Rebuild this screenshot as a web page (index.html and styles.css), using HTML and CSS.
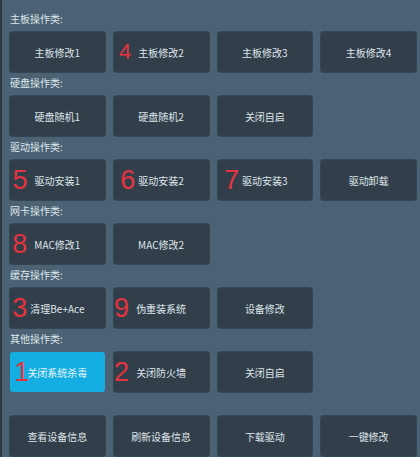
FILE: index.html
```html
<!DOCTYPE html>
<html lang="zh-CN">
<head>
    <meta charset="UTF-8">
    <meta name="viewport" content="width=device-width, initial-scale=1.0">
    <title>工具面板</title>
    <link rel="stylesheet" href="styles.css">
</head>
<body>
    <div class="panel">
        <div class="group-title">主板操作类:</div>
        <div class="btn-row">
            <button class="btn"><span class="txt">主板修改1</span></button>
            <button class="btn"><span class="txt"><span class="num num-sm">4</span>主板修改2</span></button>
            <button class="btn"><span class="txt">主板修改3</span></button>
            <button class="btn"><span class="txt">主板修改4</span></button>
        </div>

        <div class="group-title">硬盘操作类:</div>
        <div class="btn-row">
            <button class="btn"><span class="txt">硬盘随机1</span></button>
            <button class="btn"><span class="txt">硬盘随机2</span></button>
            <button class="btn"><span class="txt">关闭自启</span></button>
        </div>

        <div class="group-title">驱动操作类:</div>
        <div class="btn-row">
            <button class="btn"><span class="txt"><span class="num">5</span>驱动安装1</span></button>
            <button class="btn"><span class="txt"><span class="num num-near">6</span>驱动安装2</span></button>
            <button class="btn"><span class="txt"><span class="num num-near">7</span>驱动安装3</span></button>
            <button class="btn"><span class="txt">驱动卸载</span></button>
        </div>

        <div class="group-title">网卡操作类:</div>
        <div class="btn-row">
            <button class="btn"><span class="txt"><span class="num">8</span>MAC修改1</span></button>
            <button class="btn"><span class="txt">MAC修改2</span></button>
        </div>

        <div class="group-title">缓存操作类:</div>
        <div class="btn-row">
            <button class="btn"><span class="txt"><span class="num num-near">3</span>清理Be+Ace</span></button>
            <button class="btn"><span class="txt"><span class="num">9</span>伪重装系统</span></button>
            <button class="btn"><span class="txt">设备修改</span></button>
        </div>

        <div class="group-title">其他操作类:</div>
        <div class="btn-row">
            <button class="btn active"><span class="txt"><span class="num num-one">1</span>关闭系统杀毒</span></button>
            <button class="btn"><span class="txt"><span class="num">2</span>关闭防火墙</span></button>
            <button class="btn"><span class="txt">关闭自启</span></button>
        </div>

        <div class="group-title"></div>
        <div class="btn-row">
            <button class="btn"><span class="txt">查看设备信息</span></button>
            <button class="btn"><span class="txt">刷新设备信息</span></button>
            <button class="btn"><span class="txt">下载驱动</span></button>
            <button class="btn"><span class="txt">一键修改</span></button>
        </div>
    </div>
</body>
</html>
```

FILE: styles.css
```css
html, body {
    margin: 0;
    padding: 0;
    height: 100%;
}

body {
    background-color: #4a6274;
    font-family: "Noto Sans CJK SC", "Noto Sans", sans-serif;
    overflow: hidden;
}

.panel {
    border-left: 2px solid #2b3a45;
    min-height: 100%;
    box-sizing: border-box;
    padding: 8px 4px 0 8px;
}

.group-title {
    height: 22px;
    line-height: 22px;
    padding-bottom: 2px;
    font-size: 10px;
    color: #dfe6eb;
}

.btn-row {
    display: grid;
    grid-template-columns: repeat(4, 1fr);
    column-gap: 9px;
}

.btn {
    height: 40px;
    background-color: #323f4a;
    border: none;
    border-radius: 3px;
    box-shadow: 0 0 0 1px rgba(40, 52, 62, 0.6);
    color: #dfe5ea;
    font-family: "Noto Sans CJK SC", "Noto Sans", sans-serif;
    font-size: 10px;
    padding: 0;
    display: flex;
    align-items: center;
    justify-content: center;
    cursor: pointer;
}

.btn.active {
    background-color: #14aee2;
    box-shadow: none;
    color: #eaf6fb;
}

.txt {
    position: relative;
}

.num {
    position: absolute;
    right: 100%;
    top: 50%;
    transform: translateY(-50%);
    margin-right: 7px;
    font-family: "Liberation Sans", "Noto Sans", sans-serif;
    font-size: 27px;
    line-height: 1;
    color: #e5333f;
}

.num-sm {
    font-size: 22px;
}

.num-near {
    margin-right: 3px;
}

.num-one {
    margin-right: -2px;
}
```
